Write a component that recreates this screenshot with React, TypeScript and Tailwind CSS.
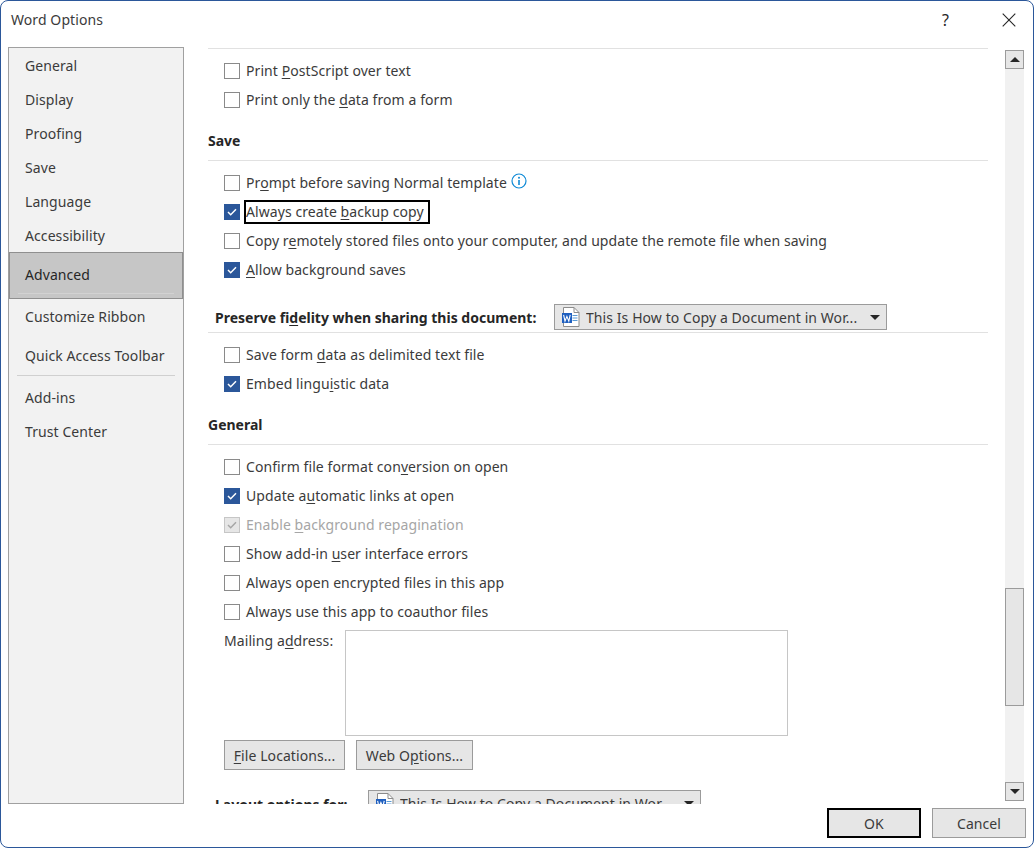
import { ReactNode } from "react";

// "_" marks the access key letter, which Word underlines
function Label({ text }: { text: string }) {
  const i = text.indexOf("_");
  if (i < 0) return <span>{text}</span>;
  return (
    <span>
      {text.slice(0, i)}
      <u className="underline underline-offset-2">{text[i + 1]}</u>
      {text.slice(i + 2)}
    </span>
  );
}

function Check({ checked, disabled }: { checked?: boolean; disabled?: boolean }) {
  if (disabled) {
    return (
      <span className="w-4 h-4 shrink-0 border border-[#c6c6c6] bg-[#e6e6e6] flex items-center justify-center">
        <CheckMark color="#a6a6a6" />
      </span>
    );
  }
  if (checked) {
    return (
      <span className="w-4 h-4 shrink-0 border border-[#2b579a] bg-[#2b579a] flex items-center justify-center">
        <CheckMark color="#ffffff" />
      </span>
    );
  }
  return <span className="w-4 h-4 shrink-0 border border-[#8a8a8a] bg-white" />;
}

function CheckMark({ color }: { color: string }) {
  return (
    <svg width="10" height="8" viewBox="0 0 10 8" fill="none">
      <path d="M1 4l2.7 2.7L9 1.3" stroke={color} strokeWidth="1.5" />
    </svg>
  );
}

function Row({
  text,
  checked,
  disabled,
  children,
}: {
  text: string;
  checked?: boolean;
  disabled?: boolean;
  children?: ReactNode;
}) {
  return (
    <div className="h-[29px] flex items-center pl-4 shrink-0">
      <Check checked={checked} disabled={disabled} />
      <span className={`ml-[6px] whitespace-nowrap ${disabled ? "text-[#a6a6a6]" : "text-[#3b3b3b]"}`}>
        <Label text={text} />
      </span>
      {children}
    </div>
  );
}

function Heading({ text }: { text: string }) {
  return (
    <div className="h-[46px] box-border flex items-end pb-[9px] font-bold tracking-normal text-[#262626] shrink-0">
      {text}
    </div>
  );
}

function Rule() {
  return <div className="h-px bg-[#e1e1e1] shrink-0" />;
}

function WordIcon() {
  return (
    <svg width="19" height="20" viewBox="0 0 19 20" fill="none" className="shrink-0">
      <path d="M2.5.5h10.5l5 5v14h-15.5z" fill="#fff" stroke="#8c8c8c" />
      <path d="M13 .5v5h5" stroke="#8c8c8c" />
      <path d="M11.5 8.5h5M11.5 11h5M11.5 13.5h5" stroke="#5b9bd5" />
      <rect x="1" y="6" width="10" height="10" fill="#1f5fbf" />
      <path d="M2.6 7.8l1.4 6.4 1.9-4.8 1.9 4.8 1.4-6.4" stroke="#fff" strokeWidth="1.1" fill="none" />
    </svg>
  );
}

function Combo({ width }: { width: string }) {
  return (
    <div className={`${width} h-[26px] shrink-0 border border-[#9b9b9b] bg-[#e6e6e6] flex items-center pl-[6px] text-[#3b3b3b]`}>
      <WordIcon />
      <span className="ml-[6px] pt-[2px] flex-1 whitespace-nowrap overflow-hidden">This Is How to Copy a Document in Wor...</span>
      <Triangle className="mr-[6px]" />
    </div>
  );
}

function Triangle({ className, up }: { className?: string; up?: boolean }) {
  return (
    <svg width="10" height="5" viewBox="0 0 10 5" className={className}>
      <path d={up ? "M0 5h10L5 0z" : "M0 0h10L5 5z"} fill="#262626" />
    </svg>
  );
}

function Btn({ text, className }: { text: string; className: string }) {
  return (
    <button className={`h-[30px] bg-[#e6e6e6] text-[#3b3b3b] flex items-center justify-center pt-[2px] ${className}`}>
      <Label text={text} />
    </button>
  );
}

const navTop = ["General", "Display", "Proofing", "Save", "Language", "Accessibility"];

export default function App() {
  return (
    <div className="w-[1034px] h-[848px] box-border border border-[#2b579a] rounded-[8px] bg-white overflow-hidden font-['Noto_Sans','Open_Sans',sans-serif] text-[14px] leading-[20px] tracking-[0.08px]">
      <div className="h-[46px] flex items-center pl-[10px] pr-[17px] pb-[8px] text-[#3b3b3b]">
        <span className="flex-1">Word Options</span>
        <span className="text-[16px] text-[#262626] mr-[53px]">?</span>
        <svg width="14" height="14" viewBox="0 0 14 14" fill="none">
          <path d="M.7.7l12.6 12.6M13.3.7L.7 13.3" stroke="#262626" strokeWidth="1.1" />
        </svg>
      </div>

      <div className="h-[757px] flex">
        <div className="ml-[7px] w-[176px] border border-[#a0a0a0] bg-[#f2f2f2] text-[#3b3b3b] flex flex-col shrink-0">
          {navTop.map((n) => (
            <div key={n} className="h-[34px] flex items-center pl-4 pt-[2px] shrink-0">
              {n}
            </div>
          ))}
          <div className="relative h-[47px] shrink-0 border border-[#8f8f8f] bg-[#c6c6c6] flex items-center pl-[15px] pb-[2px] text-[#262626]">
            Advanced
            <div className="absolute left-2 right-2 bottom-[4px] h-px bg-[#d2d2d2]" />
          </div>
          <div className="h-[36px] flex items-center pl-4 shrink-0">Customize Ribbon</div>
          <div className="h-[40px] flex items-center pl-4 pt-[2px] shrink-0">Quick Access Toolbar</div>
          <div className="h-px mx-2 bg-[#d0d0d0] shrink-0" />
          <div className="h-[34px] mt-1 flex items-center pl-4 pt-[2px] shrink-0">Add-ins</div>
          <div className="h-[34px] flex items-center pl-4 pt-[2px] shrink-0">Trust Center</div>
        </div>

        <div className="ml-[24px] w-[780px] h-[757px] overflow-hidden flex flex-col shrink-0">
          <div className="mt-px">
            <Rule />
          </div>
          <div className="h-[7px] shrink-0" />
          <Row text="Print _PostScript over text" />
          <Row text="Print only the _data from a form" />
          <Heading text="Save" />
          <Rule />
          <div className="h-[7px] shrink-0" />
          <Row text="Pr_ompt before saving Normal template">
            <svg width="16" height="16" viewBox="0 0 16 16" fill="none" className="ml-[4px] -mt-[4px]">
              <circle cx="8" cy="8" r="7" stroke="#0f8ad6" strokeWidth="1.2" />
              <circle cx="8" cy="4.8" r="1" fill="#0f8ad6" />
              <path d="M8 7v5" stroke="#0f8ad6" strokeWidth="1.6" />
            </svg>
          </Row>
          <div className="h-[29px] flex items-center pl-4 shrink-0">
            <Check checked />
            <span className="ml-[4px] w-[186px] h-[24px] border-2 border-black flex items-center whitespace-nowrap text-[#3b3b3b]">
              <Label text="Always create _backup copy" />
            </span>
          </div>
          <Row text="Copy r_emotely stored files onto your computer, and update the remote file when saving" />
          <Row text="_Allow background saves" checked />
          <div className="h-[48px] pl-[7px] flex items-end shrink-0">
            <span className="font-bold tracking-normal text-[#262626] whitespace-nowrap pb-[4px]">
              <Label text="Preserve fi_delity when sharing this document:" />
            </span>
            <div className="ml-auto mr-[101px] mb-[2px]">
              <Combo width="w-[333px]" />
            </div>
          </div>
          <Rule />
          <div className="h-[7px] shrink-0" />
          <Row text="Save form _data as delimited text file" />
          <Row text="Embed lingu_istic data" checked />
          <Heading text="General" />
          <Rule />
          <div className="h-[7px] shrink-0" />
          <Row text="Confirm file format con_version on open" />
          <Row text="Update a_utomatic links at open" checked />
          <Row text="Enable _background repagination" disabled />
          <Row text="Show add-in _user interface errors" />
          <Row text="Always open encrypted files in this app" />
          <Row text="Always use this app to coauthor files" />
          <div className="mt-[4px] pl-4 flex shrink-0">
            <span className="w-[121px] pt-[1px] text-[#3b3b3b]">
              <Label text="Mailing a_ddress:" />
            </span>
            <div className="w-[443px] h-[106px] border border-[#c6c6c6] bg-white" />
          </div>
          <div className="mt-[4px] pl-4 flex gap-[11px] shrink-0">
            <Btn text="_File Locations..." className="w-[121px] border border-[#9b9b9b]" />
            <Btn text="Web O_ptions..." className="w-[117px] border border-[#9b9b9b]" />
          </div>
          <div className="mt-[20px] pl-[7px] flex shrink-0">
            <span className="w-[153px] pt-[5px] font-bold tracking-normal text-[#262626] whitespace-nowrap">Layout options for:</span>
            <Combo width="w-[333px]" />
          </div>
        </div>

        <div className="ml-[17px] mt-[3px] w-[19px] h-[751px] bg-[#f1f1f1] flex flex-col shrink-0">
          <div className="h-[19px] border border-[#9b9b9b] bg-[#e6e6e6] flex items-center justify-center shrink-0">
            <Triangle up />
          </div>
          <div className="h-[519px] shrink-0" />
          <div className="h-[118px] border border-[#9b9b9b] bg-[#e6e6e6] shrink-0" />
          <div className="flex-1" />
          <div className="h-[19px] border border-[#9b9b9b] bg-[#e6e6e6] flex items-center justify-center shrink-0">
            <Triangle />
          </div>
        </div>
      </div>

      <div className="mt-[4px] flex justify-end gap-[11px] pr-[7px]">
        <Btn text="OK" className="w-[94px] border-2 border-black" />
        <Btn text="Cancel" className="w-[94px] border border-[#9b9b9b]" />
      </div>
    </div>
  );
}
